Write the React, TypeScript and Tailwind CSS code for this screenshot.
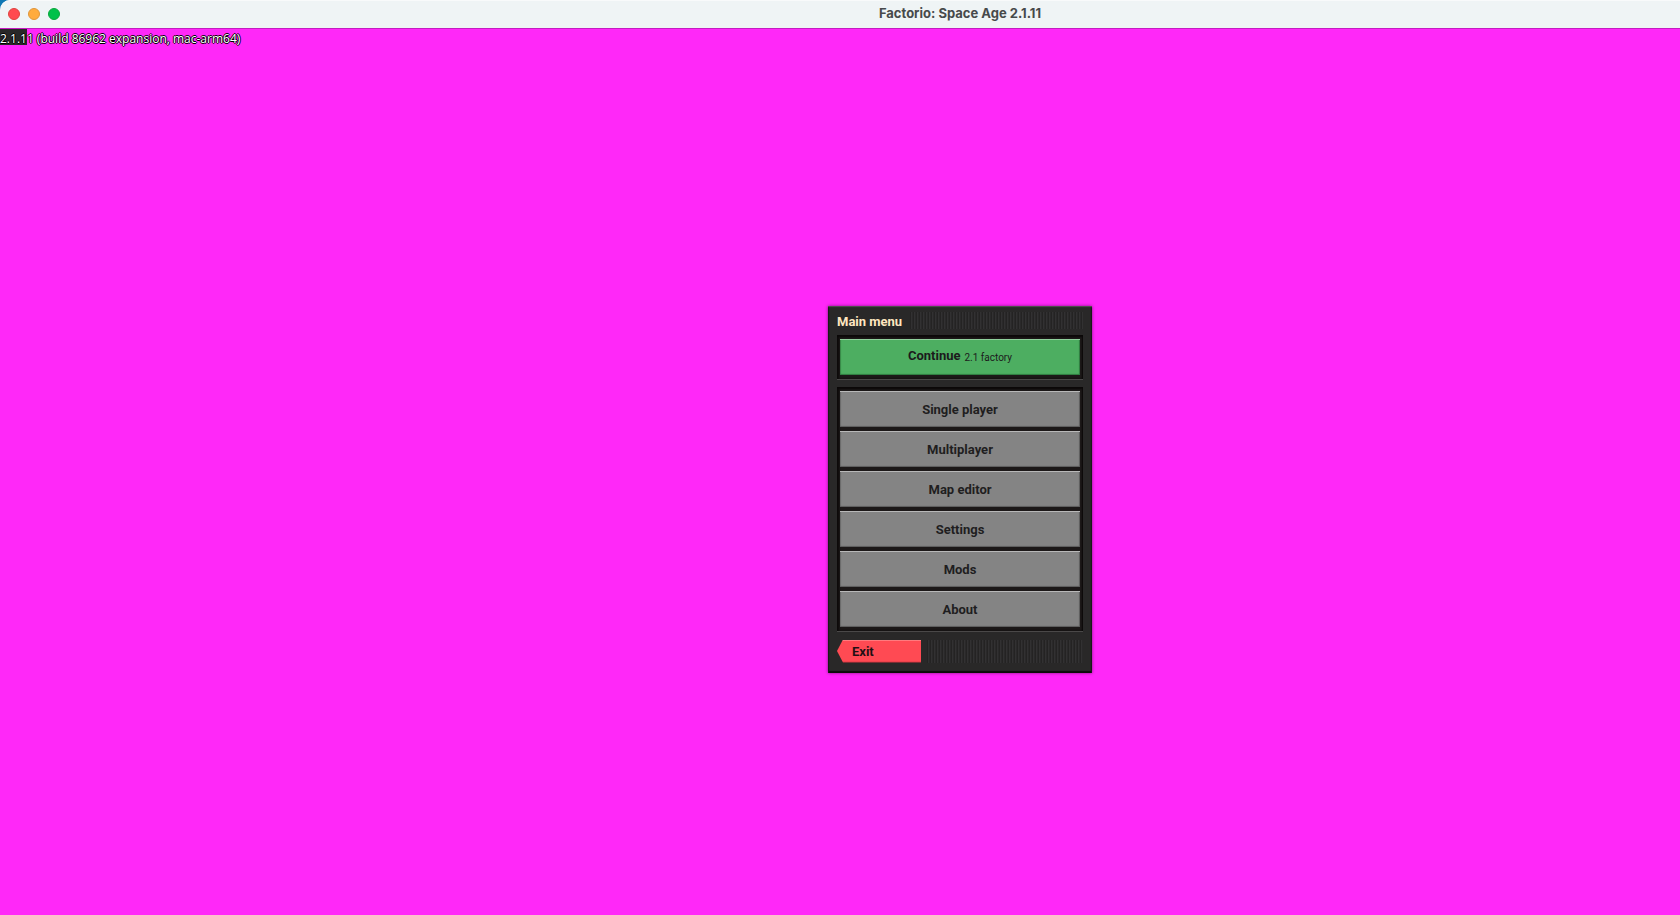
const entries = ["Single player", "Multiplayer", "Map editor", "Settings", "Mods", "About"];

const frame =
  "flex flex-col gap-1 bg-[#1c1818] px-[3px] py-1 shadow-[inset_0_2px_2px_#0b0808,inset_2px_0_2px_#0f0c0c,inset_-1px_0_1px_#0f0c0c,0_1px_0_#4a4848]";

function Grip() {
  return (
    <div className="flex-1 self-stretch bg-[repeating-linear-gradient(90deg,#242323_0_1px,#323132_1px_2px,#2a292a_2px_3px)]" />
  );
}

function TitleBar() {
  return (
    <header className="relative flex h-7 shrink-0 items-center justify-center rounded-tl-[10px] bg-[#eff4f5] shadow-[inset_0_1px_0_#f8fafa]">
      <div className="absolute left-2 flex gap-2">
        <button aria-label="Close" className="h-3 w-3 rounded-full border border-[#e0443e] bg-[#ff4b50]" />
        <button aria-label="Minimize" className="h-3 w-3 rounded-full border border-[#e0963a] bg-[#ffab3d]" />
        <button aria-label="Zoom" className="h-3 w-3 rounded-full border border-[#0aa83c] bg-[#00c14a]" />
      </div>
      <h1 className="pl-60 font-[Inter] text-[13px] font-bold text-[#474a4b]">Factorio: Space Age 2.1.11</h1>
    </header>
  );
}

function MainMenu() {
  return (
    <section className="w-[264px] bg-[#292828] px-[9px] pb-[10px] shadow-[inset_0_1px_1px_#555352,inset_1px_0_1px_#151414,inset_-1px_0_1px_#151414,inset_0_-2px_1px_#0c0b0b,0_0_3px_#80107c]">
      <div className="flex h-[29px] gap-2 py-[6px]">
        <h2 className="pt-[2px] text-[13px] leading-4 font-bold text-[#ffe6c0]">Main menu</h2>
        <Grip />
      </div>
      <div className={frame}>
        <button className="flex h-9 items-center justify-center gap-1 bg-[#4dae61] pb-[2px] text-[#1c1a1c] shadow-[inset_0_1px_0_#8fd09b,inset_0_-1px_1px_#2f7a40,inset_1px_0_1px_#3a8a4a,inset_-1px_0_1px_#2f7a40]">
          <span className="text-[13px] font-bold">Continue</span>
          <span className="pt-1 text-[10px]">2.1 factory</span>
        </button>
      </div>
      <nav className={`${frame} mt-2`}>
        {entries.map((entry) => (
          <button
            key={entry}
            className="h-9 bg-[#848484] pt-[2px] text-[13px] font-bold text-[#1f1e1f] shadow-[inset_0_1px_0_#b8b8b8,inset_0_-1px_1px_#5c5c5c,inset_1px_0_1px_#6c6c6c,inset_-1px_0_1px_#5c5c5c]"
          >
            {entry}
          </button>
        ))}
      </nav>
      <div className="mt-[9px] flex h-[23px] gap-[6px]">
        <button className="w-[84px] bg-[linear-gradient(#ff7a7e_0_1px,#ff4a53_1px_21px,#c22c38)] pt-[2px] pl-[15px] text-left text-[13px] font-bold text-[#1f1014] [clip-path:polygon(6px_0,100%_0,100%_100%,6px_100%,0_50%)]">
          Exit
        </button>
        <Grip />
      </div>
    </section>
  );
}

export default function App() {
  return (
    <div className="flex min-h-screen flex-col bg-[#0f78b4] font-[Roboto,sans-serif]">
      <TitleBar />
      <main className="relative flex flex-1 items-center justify-center border-t border-[#c41cc0] bg-[#ff28f8] pt-[34px] pl-60">
        <div className="absolute top-0 left-0 h-4 w-[27px] bg-[#292828]" />
        <p className="absolute top-0 left-0 font-['Open_Sans',sans-serif] text-xs leading-5 text-white [text-shadow:1px_0_#000,-1px_0_#000,0_1px_#000,0_-1px_#000]">
          2.1.11 (build 86962 expansion, mac-arm64)
        </p>
        <MainMenu />
      </main>
    </div>
  );
}
